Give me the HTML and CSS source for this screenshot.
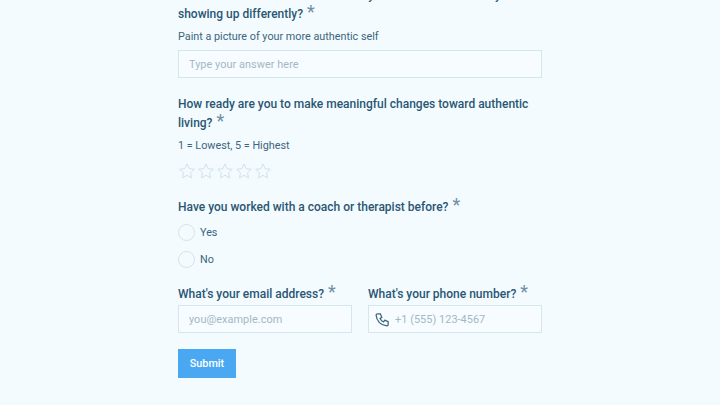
FILE: index.html
```html
<!DOCTYPE html>
<html lang="en">
<head>
<meta charset="utf-8">
<title>Authentic living form</title>
<link rel="stylesheet" href="styles.css">
</head>
<body>
<form class="form">
  <div class="field">
    <label class="question">What would it feel like to be honestly whole and at one today<br>showing up differently? <span class="req">*</span></label>
    <p class="hint">Paint a picture of your more authentic self</p>
    <div class="input"><span class="placeholder">Type your answer here</span></div>
  </div>
  <div class="field">
    <label class="question">How ready are you to make meaningful changes toward authentic living? <span class="req">*</span></label>
    <p class="hint">1 = Lowest, 5 = Highest</p>
    <div class="stars">
      <svg class="star" viewBox="0 0 24 24"><path d="M12 2.6l2.9 6.3 6.9.8-5.1 4.7 1.4 6.8-6.1-3.4-6.1 3.4 1.4-6.8-5.1-4.7 6.9-.8z"/></svg>
      <svg class="star" viewBox="0 0 24 24"><path d="M12 2.6l2.9 6.3 6.9.8-5.1 4.7 1.4 6.8-6.1-3.4-6.1 3.4 1.4-6.8-5.1-4.7 6.9-.8z"/></svg>
      <svg class="star" viewBox="0 0 24 24"><path d="M12 2.6l2.9 6.3 6.9.8-5.1 4.7 1.4 6.8-6.1-3.4-6.1 3.4 1.4-6.8-5.1-4.7 6.9-.8z"/></svg>
      <svg class="star" viewBox="0 0 24 24"><path d="M12 2.6l2.9 6.3 6.9.8-5.1 4.7 1.4 6.8-6.1-3.4-6.1 3.4 1.4-6.8-5.1-4.7 6.9-.8z"/></svg>
      <svg class="star" viewBox="0 0 24 24"><path d="M12 2.6l2.9 6.3 6.9.8-5.1 4.7 1.4 6.8-6.1-3.4-6.1 3.4 1.4-6.8-5.1-4.7 6.9-.8z"/></svg>
    </div>
  </div>
  <div class="field">
    <label class="question">Have you worked with a coach or therapist before? <span class="req">*</span></label>
    <div class="options">
      <div class="option"><span class="radio"></span><span>Yes</span></div>
      <div class="option"><span class="radio"></span><span>No</span></div>
    </div>
  </div>
  <div class="pair">
    <div class="cell">
      <label class="question">What's your email address? <span class="req">*</span></label>
      <div class="input"><span class="placeholder">you@example.com</span></div>
    </div>
    <div class="cell">
      <label class="question">What's your phone number? <span class="req">*</span></label>
      <div class="input input-phone">
        <svg class="phone" viewBox="0 0 24 24"><path d="M5 4h4l2 5-2.500 1.500a11 11 0 0 0 5 5l1.500-2.500 5 2v4a2 2 0 0 1-2 2A16 16 0 0 1 3 6a2 2 0 0 1 2-2"/></svg>
        <span class="placeholder">+1 (555) 123-4567</span>
      </div>
    </div>
  </div>
  <button class="submit" type="button">Submit</button>
</form>
</body>
</html>
```
FILE: styles.css
```css
html, body {
  margin: 0;
  height: 405px;
  overflow: hidden;
  background: #f3fbff;
}
.form {
  width: 364px;
  margin: -14px auto 0;
  display: flex;
  flex-direction: column;
  font-family: Roboto, sans-serif;
  color: #2f5a73;
}
.field { margin-bottom: 17px; }
.question {
  display: block;
  font-size: 12px;
  font-weight: 500;
  line-height: 19px;
  color: #2a5673;
}
.req {
  margin-left: 1px;
  font-size: 18px;
  font-weight: 400;
  line-height: 10px;
  color: #6f8ea3;
}
.hint {
  margin: 5px 0;
  font-size: 10.8px;
  line-height: 16px;
  color: #3c657c;
}
.input {
  height: 28px;
  box-sizing: border-box;
  border: 1px solid #d5e6ec;
  background: #f6fcff;
  padding: 0 10px;
  display: flex;
  align-items: center;
  gap: 4px;
  font-size: 10.9px;
}
.input-phone { padding-left: 5px; }
.placeholder { color: #a3b8c4; letter-spacing: .05px; }
.phone {
  width: 17px;
  height: 17px;
  fill: none;
  stroke: #3e6379;
  stroke-width: 1.8;
  stroke-linejoin: round;
}
.stars { display: flex; gap: 1px; height: 19px; padding-top: 3px; }
.star {
  width: 18px;
  height: 18px;
  fill: none;
  stroke: #c9e0e6;
  stroke-width: 1.2;
}
.options {
  margin-top: 7px;
  display: flex;
  flex-direction: column;
  gap: 10px;
}
.option {
  display: flex;
  align-items: center;
  gap: 5px;
  height: 17px;
  font-size: 10.8px;
  color: #3c657c;
}
.radio {
  width: 17px;
  height: 17px;
  box-sizing: border-box;
  border: 1px solid #d3e3e9;
  border-radius: 50%;
}
.pair {
  display: grid;
  grid-template-columns: 1fr 1fr;
  gap: 16px;
}
.pair .question { margin-bottom: 1px; }
.submit {
  align-self: flex-start;
  margin-top: 16px;
  width: 58px;
  height: 29px;
  border: 0;
  padding: 0;
  background: #4aa8f2;
  color: #fff;
  font-family: Roboto, sans-serif;
  font-size: 10.8px;
  font-weight: 500;
}
```
